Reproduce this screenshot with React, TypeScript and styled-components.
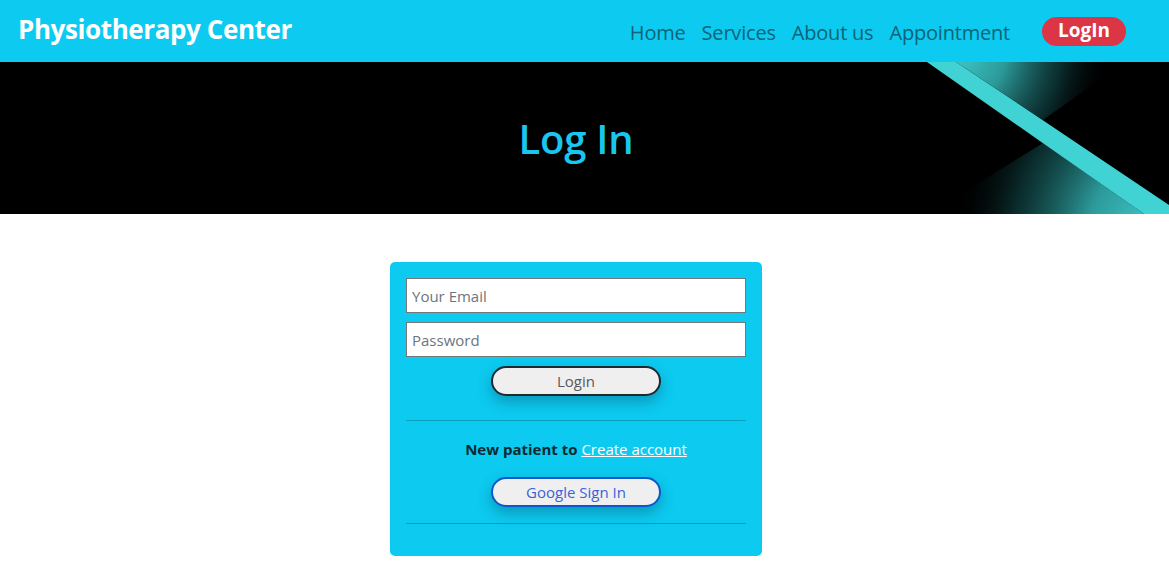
import React from "react";
import styled, { createGlobalStyle } from "styled-components";

const Global = createGlobalStyle`
  * { box-sizing: border-box; }
  body {
    margin: 0;
    font-family: "Open Sans", "Noto Sans", sans-serif;
    background: #ffffff;
    color: #212529;
  }
`;

const Page = styled.div`
  width: 1169px;
  min-height: 586px;
  overflow: hidden;
`;

const NavBar = styled.nav`
  height: 62px;
  background: #0dcaf0;
  display: flex;
  align-items: center;
  justify-content: space-between;
  padding: 0 43px 0 18px;
`;

const Brand = styled.a`
  color: #ffffff;
  font-size: 26px;
  font-weight: 700;
  text-decoration: none;
  letter-spacing: -0.4px;
  margin-top: -5px;
`;

const NavLinks = styled.div`
  display: flex;
  align-items: center;
  margin-top: 3px;
`;

const NavLink = styled.a`
  color: #0b6477;
  font-size: 20px;
  font-weight: 500;
  padding: 0 8px;
  text-decoration: none;
  letter-spacing: -0.2px;
`;

const LoginPill = styled.button`
  margin-left: 24px;
  height: 29px;
  width: 84px;
  border: none;
  border-radius: 15px;
  background: #dc3545;
  color: #ffffff;
  font-family: inherit;
  font-size: 19px;
  font-weight: 700;
  display: flex;
  align-items: center;
  justify-content: center;
  padding: 0 0 2px;
  margin-top: -3px;
`;

const Hero = styled.header`
  position: relative;
  height: 152px;
  background: #000000;
  display: flex;
  align-items: center;
  justify-content: center;
  padding-right: 17px;
  overflow: hidden;
`;

const HeroTitle = styled.h1`
  margin: 0;
  color: #19c6ee;
  font-size: 40px;
  font-weight: 600;
  letter-spacing: -0.2px;
`;

const Decor = styled.svg`
  position: absolute;
  top: 0;
  right: 0;
  width: 269px;
  height: 152px;
`;

const Main = styled.main`
  display: flex;
  justify-content: center;
  padding: 48px 17px 30px 0;
`;

const Card = styled.form`
  width: 372px;
  background: #0dcaf0;
  border-radius: 5px;
  padding: 16px 16px 32px;
  display: flex;
  flex-direction: column;
  align-items: stretch;
`;

const Field = styled.input`
  height: 35px;
  width: 100%;
  border: 1px solid #767676;
  border-radius: 0;
  background: #ffffff;
  padding: 1px 5px 0;
  font-family: inherit;
  font-size: 15px;
  color: #212529;
  & + & { margin-top: 9px; }
  &::placeholder { color: #6c757d; }
`;

const PillButton = styled.button<{ $google?: boolean }>`
  align-self: center;
  width: 170px;
  height: 30px;
  flex: 0 0 30px;
  border-radius: 15px;
  border: 2px solid ${(p) => (p.$google ? "#0b57d0" : "#1b2a30")};
  background: #efefef;
  color: ${(p) => (p.$google ? "#3b63d8" : "#5a5a5a")};
  font-family: inherit;
  font-size: 15px;
  padding: 0 0 1px;
  box-shadow: 0 6px 14px rgba(0, 60, 80, 0.35);
  margin-top: ${(p) => (p.$google ? "18px" : "9px")};
`;

const Rule = styled.hr<{ $top: number }>`
  margin: ${(p) => p.$top}px 0 0;
  border: none;
  border-top: 1px solid rgba(0, 0, 0, 0.22);
  width: 100%;
`;

const Prompt = styled.p`
  margin: 18px 0 0;
  text-align: center;
  font-size: 15px;
  font-weight: 700;
  color: #0b2a33;
  line-height: 20px;
`;

const CreateLink = styled.a`
  color: #ffffff;
  font-weight: 400;
  text-decoration: underline;
`;

export default function App() {
  return (
    <Page>
      <Global />
      <NavBar>
        <Brand href="#">Physiotherapy Center</Brand>
        <NavLinks>
          <NavLink href="#">Home</NavLink>
          <NavLink href="#">Services</NavLink>
          <NavLink href="#">About us</NavLink>
          <NavLink href="#">Appointment</NavLink>
          <LoginPill type="button">LogIn</LoginPill>
        </NavLinks>
      </NavBar>
      <Hero>
        <HeroTitle>Log In</HeroTitle>
        <Decor viewBox="0 0 269 152" preserveAspectRatio="none">
          <defs>
            <radialGradient id="upGlow" cx="50" cy="-12" r="160" gradientUnits="userSpaceOnUse">
              <stop offset="0" stopColor="#41d3d3" stopOpacity="1" />
              <stop offset="0.35" stopColor="#38c0c0" stopOpacity="0.8" />
              <stop offset="0.7" stopColor="#1f7f80" stopOpacity="0.35" />
              <stop offset="1" stopColor="#000000" stopOpacity="0" />
            </radialGradient>
            <radialGradient id="lowGlow" cx="262" cy="170" r="210" gradientUnits="userSpaceOnUse">
              <stop offset="0" stopColor="#41d3d3" stopOpacity="1" />
              <stop offset="0.35" stopColor="#38c0c0" stopOpacity="0.8" />
              <stop offset="0.7" stopColor="#1f7f80" stopOpacity="0.35" />
              <stop offset="1" stopColor="#000000" stopOpacity="0" />
            </radialGradient>
          </defs>
          <polygon points="56,0 225,0 143,58" fill="url(#upGlow)" />
          <polygon points="143,81 244,152 28,152" fill="url(#lowGlow)" />
          <polygon points="27,0 56,0 269,143 269,152 244,152" fill="#41d3d3" />
        </Decor>
      </Hero>
      <Main>
        <Card onSubmit={(e) => e.preventDefault()}>
          <Field type="email" placeholder="Your Email" />
          <Field type="password" placeholder="Password" />
          <PillButton type="submit">Login</PillButton>
          <Rule $top={24} />
          <Prompt>
            New patient to <CreateLink href="#">Create account</CreateLink>
          </Prompt>
          <PillButton type="button" $google>
            Google Sign In
          </PillButton>
          <Rule $top={16} />
        </Card>
      </Main>
    </Page>
  );
}
